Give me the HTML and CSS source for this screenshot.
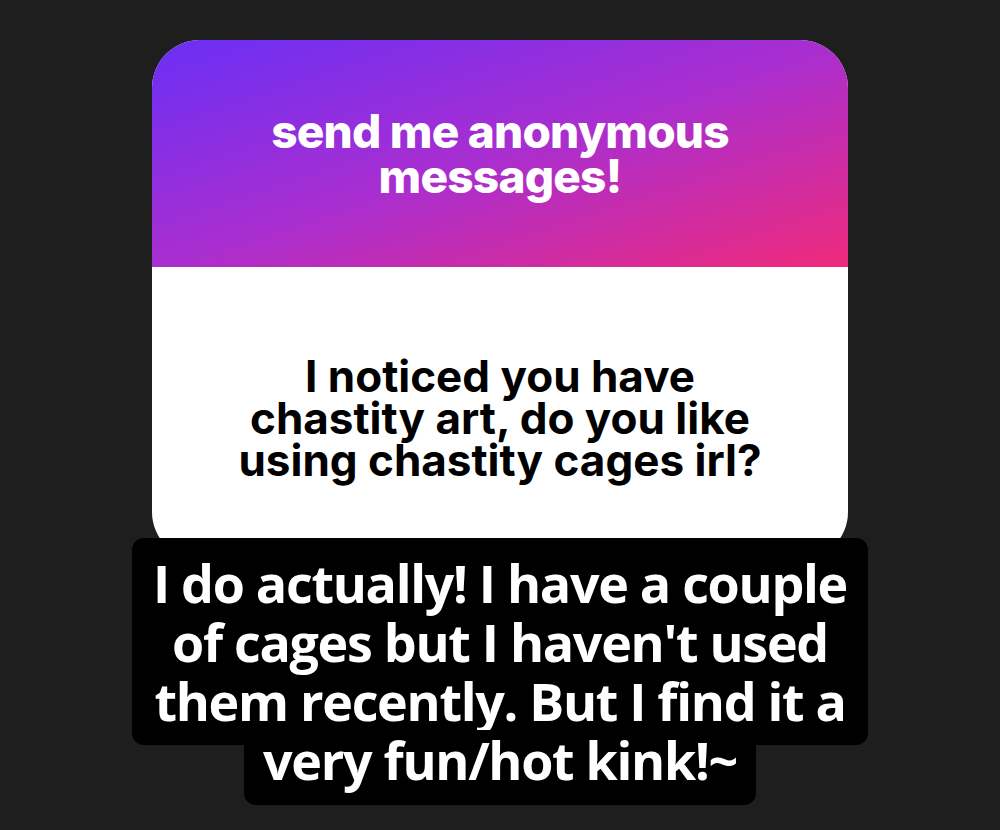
FILE: index.html
```html
<!DOCTYPE html>
<html>
<head>
    <title>Anonymous message</title>
    <link rel="stylesheet" href="styles.css">
</head>
<body>
    <div class="story">
        <div class="card">
            <div class="card-head">
                <h2>send me anonymous<br>messages!</h2>
            </div>
            <div class="card-body">
                <p>I noticed you have<br>chastity art, do you like<br>using chastity cages irl?</p>
            </div>
        </div>

        <div class="caption">
            <div class="caption-main">I do actually! I have a couple<br>of cages but I haven't used<br>them recently. But I find it a</div>
            <div class="caption-tail">very fun/hot kink!~</div>
        </div>
    </div>
</body>
</html>
```

FILE: styles.css
```css
body { margin: 0; background: #1e1e1e; font-family: "Open Sans", sans-serif; }
.story { width: 1000px; height: 830px; padding-top: 40px; box-sizing: border-box; }

.card { width: 696px; margin: 0 auto; border-radius: 48px; overflow: hidden; background: #fff; }
.card-head {
    height: 227px;
    display: flex;
    align-items: center;
    justify-content: center;
    background: linear-gradient(to bottom right, #6a2ff5 0%, #a92ed0 50%, #ef2a7b 100%);
}
.card-head h2 {
    margin: 0;
    color: #fff;
    font-family: Inter, "Roboto", sans-serif;
    font-weight: 800;
    font-size: 46px;
    line-height: 45px;
    letter-spacing: -0.8px;
    text-align: center;
}
.card-body { height: 293px; padding-top: 88px; box-sizing: border-box; }
.card-body p {
    margin: 0;
    color: #000;
    font-family: Inter, "Roboto", sans-serif;
    font-weight: 700;
    font-size: 44px;
    line-height: 42px;
    text-align: center;
}

.caption {
    display: flex;
    flex-direction: column;
    align-items: center;
    margin-top: -22px;
    color: #fff;
    font-weight: 700;
    font-size: 52px;
    letter-spacing: -1.3px;
    text-align: center;
}
.caption-main {
    width: 736px;
    padding: 15px 0;
    line-height: 59px;
    background: #000;
    border-radius: 12px;
}
.caption-tail {
    width: 512px;
    height: 75px;
    margin-top: -15px;
    padding-bottom: 16px;
    box-sizing: border-box;
    line-height: 59px;
    background: #000;
    border-radius: 0 0 12px 12px;
}
```
